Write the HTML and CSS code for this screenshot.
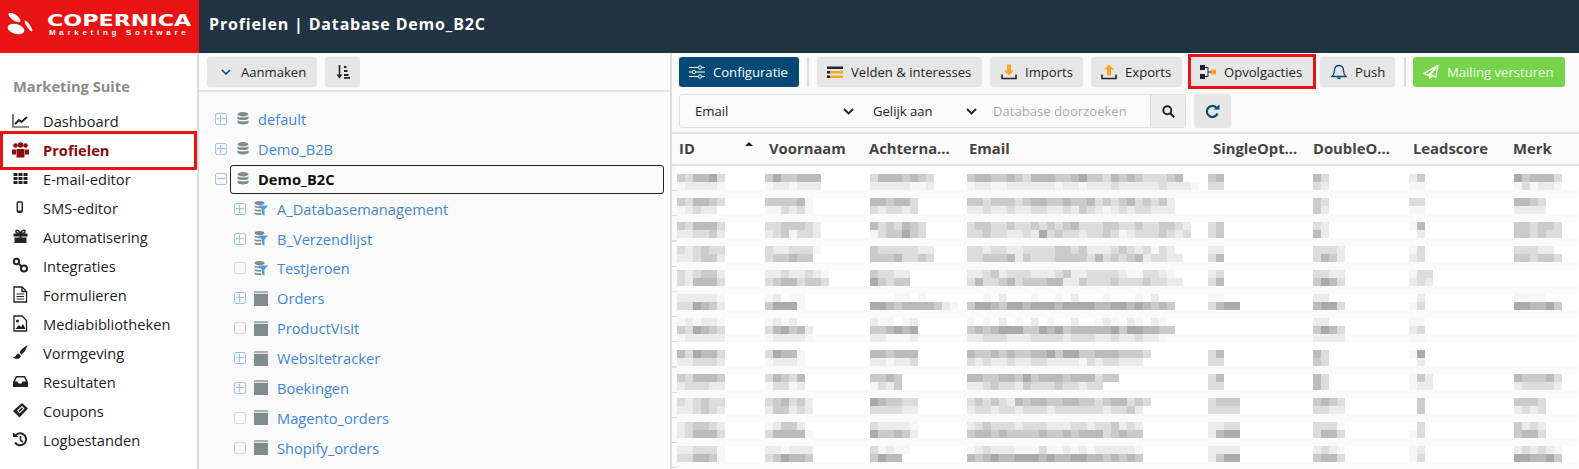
FILE: index.html
```html
<!DOCTYPE html>
<html lang="nl">
<head>
<meta charset="utf-8">
<title>Profielen | Database Demo_B2C</title>
<link rel="stylesheet" href="styles.css">
</head>
<body>
<div class="app">
  <a class="logo">
    <svg class="logo-mark" width="30" height="26" viewBox="0 0 30 26"><g fill="#fff"><ellipse cx="7.500" cy="4.500" rx="7" ry="2.900" transform="rotate(35 7.500 4.500)"/><ellipse cx="9" cy="16" rx="8.500" ry="5" transform="rotate(15 9 16)"/><ellipse cx="21.500" cy="13" rx="1.600" ry="6.500" transform="rotate(-35 21.500 13)"/></g></svg>
    <span class="logo-text"><span class="logo-name">COPERNICA</span><span class="logo-sub">Marketing Software</span></span>
  </a>
  <header class="topbar">Profielen | Database Demo_B2C</header>

  <nav class="sidebar">
    <h2 class="suite">Marketing Suite</h2>
    <ul class="menu">
      <li class="menu-item"><svg class="mi" viewBox="0 0 17 17"><path d="M1 2v13h16" fill="none" stroke="#222" stroke-width="1.200"/><path d="M3 12l4-4 2.500 2L15 5" fill="none" stroke="#222" stroke-width="2"/></svg>Dashboard</li>
      <li class="menu-item active"><svg class="mi" viewBox="0 0 17 17"><g fill="#8b0a0a"><circle cx="3.500" cy="4.500" r="2.300"/><circle cx="13.500" cy="4.500" r="2.300"/><circle cx="8.500" cy="4" r="2.800"/><path d="M0 8.500h4v5H0zM13 8.500h4v5h-4zM4.500 8h8v8.500h-8z"/></g></svg>Profielen</li>
      <li class="menu-item"><svg class="mi" viewBox="0 0 17 17"><path d="M1.500 3h4v3h-4zM6.500 3h4v3h-4zM11.500 3h4v3h-4zM1.500 7h4v3h-4zM6.500 7h4v3h-4zM11.500 7h4v3h-4zM1.500 11h4v3h-4zM6.500 11h4v3h-4zM11.500 11h4v3h-4z" fill="#222"/></svg>E-mail-editor</li>
      <li class="menu-item"><svg class="mi" viewBox="0 0 17 17"><rect x="5.300" y="3" width="5" height="10" rx="1" fill="none" stroke="#222" stroke-width="1.400"/><path d="M5.500 11.500h4.500V13.500H5.500z" fill="#222"/></svg>SMS-editor</li>
      <li class="menu-item"><svg class="mi" viewBox="0 0 17 17"><path d="M1.500 5.500h14v3h-14zM2.500 9.500h5V15h-5zM9.500 9.500h5V15h-5zM7.500 5.500h2V15h-2z" fill="#222"/><path d="M8.500 5C6 1 3.500 2 4 4s3 1 4.500 1c1.500 0 4 1 4.500-1s-2-3-4.500 1z" fill="none" stroke="#222" stroke-width="1.500"/></svg>Automatisering</li>
      <li class="menu-item"><svg class="mi" viewBox="0 0 17 17"><g fill="none" stroke="#222" stroke-width="2"><circle cx="4.500" cy="4.500" r="2.700"/><circle cx="12" cy="11.500" r="3"/><path d="M7 7l2.500 2.500"/></g></svg>Integraties</li>
      <li class="menu-item"><svg class="mi" viewBox="0 0 17 17"><path d="M2 1h8l4.500 4.500V16H2z M10 1v4.500h4.500" fill="none" stroke="#222" stroke-width="1.300"/><path d="M4.500 8h7.500M4.500 10.500h7.500M4.500 13h7.500" stroke="#222"/></svg>Formulieren</li>
      <li class="menu-item"><svg class="mi" viewBox="0 0 17 17"><path d="M2 1h8l4.500 4.500V16H2z" fill="none" stroke="#222" stroke-width="1.300"/><circle cx="5.500" cy="6" r="1.500" fill="#222"/><path d="M3.500 14l3.500-4 2 2 2-3 2.500 5z" fill="#222"/></svg>Mediabibliotheken</li>
      <li class="menu-item"><svg class="mi" viewBox="0 0 17 17"><path d="M15.500 1C12 3 8.500 6 7.500 8.500l2 2C12 9 14.500 5 15.500 1zM6.500 9.500C4 9.500 4.500 13 1 13.500c2 2 7 2 8-1.500z" fill="#222"/></svg>Vormgeving</li>
      <li class="menu-item"><svg class="mi" viewBox="0 0 17 17"><path d="M4 3h9l3 6v5H1V9z" fill="#222"/><path d="M4.800 4.500h7.400L14 8.500h-3.500l-1 2h-3l-1-2H3z" fill="#fff"/></svg>Resultaten</li>
      <li class="menu-item"><svg class="mi" viewBox="0 0 17 17"><path d="M1 9l9-8 6 5.500-8.500 9z" fill="#222"/><path d="M5 8.500l5-4.500 2.500 2.500-5 5z" fill="#fff"/><path d="M6.500 8.500l3.500-3 1 1-3.500 3.500z" fill="#222"/></svg>Coupons</li>
      <li class="menu-item"><svg class="mi" viewBox="0 0 17 17"><path d="M3.500 4.500A6 6 0 1 1 3 11.500" fill="none" stroke="#222" stroke-width="2"/><path d="M1 1.500l5.500 4.500H1z" fill="#222"/><path d="M8.500 5v4.300L11 11" fill="none" stroke="#222" stroke-width="1.600"/></svg>Logbestanden</li>
    </ul>
    <div class="mark mark-menu"></div>
  </nav>

  <main class="content">
    <section class="tree-panel">
      <div class="tree-toolbar">
        <button class="btn btn-create"><svg class="chev" width="10" height="6" viewBox="0 0 10 6"><path d="M1 1l4 4 4-4" fill="none" stroke="#004a75" stroke-width="1.500"/></svg>Aanmaken</button>
        <button class="btn btn-sort"><svg width="14" height="14" viewBox="0 0 14 14"><path d="M3.500 0v11" stroke="#222" stroke-width="1.600"/><path d="M0.500 9.500h6L3.500 13.500z" fill="#222"/><path d="M8 1h2.500v2H8zM8 5h3.500v2H8zM8 9h4.500v2H8zM8 12h6v1.800H8z" fill="#222"/></svg></button>
      </div>
      <ul class="tree">
        <li class="node"><span class="exp plus"></span><svg class="ic db" viewBox="0 0 12 13"><use href="#db"/></svg><span class="label">default</span></li>
        <li class="node"><span class="exp plus"></span><svg class="ic db" viewBox="0 0 12 13"><use href="#db"/></svg><span class="label">Demo_B2B</span></li>
        <li class="node focus"><span class="exp minus"></span><svg class="ic db" viewBox="0 0 12 13"><use href="#db"/></svg><span class="label">Demo_B2C</span></li>
        <li class="node sub"><span class="exp plus"></span><svg class="ic fl" viewBox="0 0 14 15"><use href="#fl"/></svg><span class="label">A_Databasemanagement</span></li>
        <li class="node sub"><span class="exp plus"></span><svg class="ic fl" viewBox="0 0 14 15"><use href="#fl"/></svg><span class="label">B_Verzendlijst</span></li>
        <li class="node sub"><span class="exp"></span><svg class="ic fl" viewBox="0 0 14 15"><use href="#fl"/></svg><span class="label">TestJeroen</span></li>
        <li class="node sub"><span class="exp plus"></span><svg class="ic fl" viewBox="0 0 14 15"><use href="#tb"/></svg><span class="label">Orders</span></li>
        <li class="node sub"><span class="exp"></span><svg class="ic fl" viewBox="0 0 14 15"><use href="#tb"/></svg><span class="label">ProductVisit</span></li>
        <li class="node sub"><span class="exp plus"></span><svg class="ic fl" viewBox="0 0 14 15"><use href="#tb"/></svg><span class="label">Websitetracker</span></li>
        <li class="node sub"><span class="exp plus"></span><svg class="ic fl" viewBox="0 0 14 15"><use href="#tb"/></svg><span class="label">Boekingen</span></li>
        <li class="node sub"><span class="exp"></span><svg class="ic fl" viewBox="0 0 14 15"><use href="#tb"/></svg><span class="label">Magento_orders</span></li>
        <li class="node sub"><span class="exp"></span><svg class="ic fl" viewBox="0 0 14 15"><use href="#tb"/></svg><span class="label">Shopify_orders</span></li>
      </ul>
    </section>

    <section class="data-panel">
      <div class="actions">
        <button class="btn btn-primary"><svg class="bi" viewBox="0 0 16 14"><g fill="none" stroke="#fff" stroke-width="1"><path d="M0 2.500h9M13 2.500h3M0 7h3M7 7h9M0 11.500h9M13 11.500h3"/><circle cx="11" cy="2.500" r="1.700"/><circle cx="5" cy="7" r="1.700"/><circle cx="11" cy="11.500" r="1.700"/></g></svg>Configuratie</button>
        <span class="sep"></span>
        <button class="btn btn-fields"><svg class="bi" viewBox="0 0 16 14"><path d="M0 1.500h16v2.500H0z" fill="#223"/><path d="M0 6h16v2.500H0zM0 10.500h16V13H0z" fill="#f5a623"/><path d="M0 6h3v2.500H0zM0 10.500h3V13H0z" fill="#223"/></svg>Velden &amp; interesses</button>
        <button class="btn btn-imports"><svg class="bi" viewBox="0 0 16 15"><path d="M6 0h4v6h3l-5 5-5-5h3z" fill="#f5a623"/><path d="M1 10v4h14v-4" fill="none" stroke="#223" stroke-width="1.600"/></svg>Imports</button>
        <button class="btn btn-exports"><svg class="bi" viewBox="0 0 16 15"><path d="M6 11h4V5h3L8 0 3 5h3z" fill="#f5a623"/><path d="M1 10v4h14v-4" fill="none" stroke="#223" stroke-width="1.600"/></svg>Exports</button>
        <button class="btn btn-follow"><svg class="bi" viewBox="0 0 16 16"><path d="M0 1h5v5H0zM0 10h5v5H0z" fill="#223"/><path d="M5 3.500h3v9H5M8 8h3" fill="none" stroke="#223"/><path d="M11 5.500h5v5h-5z" fill="#f5a623"/></svg>Opvolgacties</button>
        <button class="btn btn-push"><svg class="bi" viewBox="0 0 16 16"><path d="M8 1.500c-3 0-4.500 2-4.500 5 0 3-1 4.500-2.500 6h14c-1.500-1.500-2.500-3-2.500-6 0-3-1.500-5-4.500-5z" fill="none" stroke="#004a75" stroke-width="1.300"/><path d="M6 13.500c0 2.300 4 2.300 4 0z" fill="#004a75"/></svg>Push</button>
        <span class="sep sep-last"></span>
        <button class="btn btn-send"><svg class="bi" viewBox="0 0 17 16"><path d="M16 1L1 9.500l4.500 2L16 1l-9 11v3l3-3.200 3.500 1.500z" fill="none" stroke="#f2ffe8" stroke-width="1.500" stroke-linejoin="round"/></svg>Mailing versturen</button>
        <div class="mark mark-follow"></div>
      </div>
      <div class="search-row">
        <div class="search">
          <span class="sel sel-field">Email<svg width="11" height="7" viewBox="0 0 11 7"><path d="M1 1l4.500 4.500L10 1" fill="none" stroke="#222" stroke-width="1.800"/></svg></span>
          <span class="sel sel-op">Gelijk aan<svg width="11" height="7" viewBox="0 0 11 7"><path d="M1 1l4.500 4.500L10 1" fill="none" stroke="#222" stroke-width="1.800"/></svg></span>
          <span class="query">Database doorzoeken</span>
          <span class="go"><svg width="13" height="13" viewBox="0 0 13 13"><circle cx="5.300" cy="5.300" r="4" fill="none" stroke="#222" stroke-width="1.900"/><path d="M8.300 8.300l4 4" stroke="#222" stroke-width="2.200"/></svg></span>
        </div>
        <button class="btn btn-reload"><svg width="15" height="15" viewBox="0 0 15 15"><path d="M12.500 9.500A5.500 5.500 0 1 1 11.200 3.500" fill="none" stroke="#004a75" stroke-width="2.200"/><path d="M8.500 5.500h6v-5z" fill="#004a75"/></svg></button>
      </div>
      <div class="table-head">
        <span class="th th-id">ID<i class="sort-up"></i></span>
        <span class="th">Voornaam</span>
        <span class="th">Achterna…</span>
        <span class="th">Email</span>
        <span class="th">SingleOpt…</span>
        <span class="th">DoubleO…</span>
        <span class="th">Leadscore</span>
        <span class="th">Merk</span>
      </div>
      <div class="table-body"><div class="ticks"></div><div class="rows" id="rows"></div></div>
    </section>
  </main>
</div>

<svg class="defs" width="0" height="0">
  <symbol id="db" viewBox="0 0 12 13"><g fill="#7f8c8d"><ellipse cx="6" cy="2.200" rx="5.500" ry="2.200"/><path d="M.5 4.200c1 1.600 10 1.600 11 0v2.300c-1 2-10 2-11 0zM.5 8.200c1 1.600 10 1.600 11 0v2.500c-1 2.300-10 2.300-11 0z"/></g></symbol>
  <symbol id="fl" viewBox="0 0 14 15"><g fill="#7f8c8d"><ellipse cx="5.500" cy="2" rx="5" ry="2"/><path d="M.5 4.500c1 1 6 1.200 7 .8L8 7c-3 .4-6.500 0-7.500-1zM.5 8c1 .8 5 1 7 .8V10.500c-3 .3-6 0-7-1zM.5 11.500c1 .7 5 1 7 .8V14c-3 .2-6 0-7-1z"/></g><path d="M4 4.500h10L10.500 8.700v6L8 13V8.700z" fill="#4a9fe0"/></symbol>
  <symbol id="tb" viewBox="0 0 14 15"><rect y="0" width="14" height="2.300" fill="#a9b3b3"/><rect y="3" width="14" height="12" fill="#7f8c8d"/></symbol>
</svg>
<script src="script.js"></script>
</body>
</html>
```

FILE: styles.css
```css
* { box-sizing: border-box; }
html, body { margin: 0; padding: 0; height: 469px; overflow: hidden; background: #fff; }
body { font-family: "Open Sans", "Noto Sans", sans-serif; font-size: 14.670px; color: #222; }
ul { list-style: none; margin: 0; padding: 0; }
button { font: inherit; border: 0; }
.defs { position: absolute; }

.app { display: grid; grid-template-columns: 199px 1fr; grid-template-rows: 53px 416px; height: 469px; }

/* logo + top bar */
.logo { background: #ea1313; display: flex; align-items: center; padding-left: 7px; color: #fff; overflow: hidden; }
.logo-mark { flex: none; margin-top: -1px; }
.logo-text { display: flex; flex-direction: column; margin-left: 10px; margin-top: -2px; }
.logo-name { font-family: "DejaVu Sans", sans-serif; font-weight: 700; font-size: 16px; line-height: 15px; width: 144px; white-space: nowrap; transform: scaleX(1.390); transform-origin: left center; }
.logo-sub { font-family: "Liberation Sans", sans-serif; font-weight: 700; font-size: 8px; line-height: 10px; letter-spacing: 3.700px; margin-left: 2px; white-space: nowrap; }
.topbar { background: #223444; color: #fff; font-weight: 700; font-size: 16px; letter-spacing: .83px; line-height: 48px; padding-left: 10px; }

/* sidebar */
.sidebar { position: relative; border-right: 2px solid #ddd; padding: 22px 0 0 0; }
.suite { margin: 0 0 9px 13px; font-size: 14.670px; line-height: 22px; font-weight: 700; color: #8a8a8a; }
.menu-item { display: flex; align-items: center; height: 29px; padding-left: 12px; color: #222; }
.mi { width: 17px; height: 17px; margin-right: 14px; flex: none; }
.menu-item.active { color: #8b0a0a; font-weight: 700; }
.mark { position: absolute; border: 3px solid #e81414; pointer-events: none; }
.mark-menu { left: 0; top: 78px; width: 197px; height: 39px; }

/* content split */
.content { display: grid; grid-template-columns: 471px 1fr; min-width: 0; }

/* tree */
.tree-panel { background: #fafafa; }
.tree-toolbar { display: flex; gap: 8px; height: 39px; padding: 4px 8px 0; border-bottom: 2px solid #e4e4e4; }
.btn { display: inline-flex; align-items: center; flex: none; height: 30px; background: #e6e6e6; border-radius: 3px; padding: 0 0 0 10px; color: #222; font-size: 13.100px; white-space: nowrap; }
.btn svg { flex: none; }
.btn-create { width: 110px; padding-left: 14px; }
.chev { margin-right: 10px; }
.btn-sort { width: 35px; padding-left: 11px; }
.tree { padding-top: 12px; }
.node { display: flex; align-items: center; height: 29.900px; padding-left: 16px; margin-right: 6px; }
.node.sub { padding-left: 35px; }
.exp { position: relative; width: 12px; height: 12px; border: 1px solid #d9d9d9; border-radius: 2px; flex: none; background: #fafafa; }
.exp.plus, .exp.minus { border-color: #9cc3ec; }
.exp.plus::before, .exp.minus::before { content: ""; position: absolute; left: 1px; right: 1px; top: 4px; height: 2px; border-top: 1px solid #9cc3ec; }
.exp.plus::after { content: ""; position: absolute; top: 1px; bottom: 1px; left: 4px; width: 2px; border-left: 1px solid #9cc3ec; }
.ic { flex: none; }
.ic.db { width: 12px; height: 13px; margin: 0 9px 0 10px; }
.ic.fl { width: 14px; height: 15px; margin: 0 9px 0 8px; }
.label { color: #3f87d8; white-space: nowrap; }
.node.focus { position: relative; }
.node.focus .label { color: #111; font-weight: 700; }
.node.focus::after { content: ""; position: absolute; left: 31px; right: 0; top: 1px; height: 27px; border: 1px solid #222; border-radius: 3px; }

/* data panel */
.data-panel { position: relative; border-left: 2px solid #ddd; background: #fafafa; display: flex; flex-direction: column; min-width: 0; }
.actions { position: relative; display: flex; align-items: flex-start; gap: 8px; height: 41px; padding: 4px 0 0 7px; }
.bi { width: 16px; height: 16px; margin-right: 8px; }
.sep { width: 2px; height: 30px; background: #ddd; flex: none; }
.btn-primary { background: #004a75; color: #fff; width: 120px; }
.btn-fields { width: 165px; }
.btn-imports { width: 93px; padding-left: 11px; }
.btn-exports { width: 91px; }
.btn-follow { width: 124px; }
.btn-push { width: 75px; margin-left: -2px; padding-left: 11px; }
.sep-last { margin-left: 1px; margin-right: -1px; }
.btn-send { background: #76d34a; color: #f2ffe8; width: 152px; }
.mark-follow { left: 516px; top: 1px; width: 128px; height: 35px; }

.search-row { display: flex; gap: 8px; height: 38px; padding-left: 7px; }
.search { display: flex; align-items: center; width: 507px; height: 34px; border: 1px solid #ddd; border-radius: 3px; font-size: 13.100px; }
.sel { display: flex; align-items: center; justify-content: space-between; }
.sel-field { width: 174px; padding-left: 15px; }
.sel-op { width: 104px; margin-left: 19px; }
.query { flex: 1; padding-left: 16px; color: #aaa; white-space: nowrap; }
.go { width: 35px; height: 32px; display: flex; align-items: center; justify-content: center; background: #eee; border-left: 1px solid #ddd; }
.btn-reload { width: 37px; height: 34px; padding-left: 11px; }

.table-head { display: grid; grid-template-columns: 90px 100px 100px 244px 100px 100px 100px 1fr; align-items: center; height: 34px; flex: none; padding: 0 0 2px 7px; border-top: 2px solid #e4e4e4; border-bottom: 2px solid #e4e4e4; }
.th { position: relative; font-weight: 700; font-size: 14.800px; color: #444; white-space: nowrap; }
.sort-up { position: absolute; left: 66px; top: 4px; border: 4px solid transparent; border-top: 0; border-bottom: 4px solid #222; }

.table-body { display: flex; flex: 1; background: #fff; min-height: 0; overflow: hidden; }
.ticks { width: 5px; flex: none; height: 100%; background: repeating-linear-gradient(to bottom, transparent 0, transparent 24px, #ddd 24px, #ddd 25.200px); background-color: #fafafa; }
.rows { flex: 1; min-width: 0; margin-right: 1px; }
.line { display: grid; grid-template-columns: 88px 105px 97px 241px 105px 96px 105px 1fr; height: 8px; }
.line.stripe { background: #fafafa; }
.cell { display: flex; height: 8px; }
.px { display: block; width: 8px; height: 8px; flex: none; }
.g-a { background: #aaa; }
.g-b { background: #bbb; }
.g-c { background: #cbcbcb; }
.g-d { background: #dcdcdc; }
.g-e { background: #ebebeb; }
.g-f { background: #f6f6f6; }
```

FILE: script.js
```js
// Pixelated (anonymised) table cells: one string of grey levels per column, per 8px line.
var S = null;
var LINES = [
  [],
  ["cdbbad","caccbbb","dbbbcbcd","cbbccbcdbbbccbaccdbcbcdddcb","cb","bd","ec","acbbbd"],
  ["feeeef","feefeee","eeeeeffe","feeffeeeeeefeefeeedeeeeedeeef","dd","de","ff","fdfeef"],
  S,
  ["cdbbcd","ccccbf","bbcbbd","ccdcccdcbbccbccbdcdcbdcdce","","cd","dd","bbcd"],
  ["fedee","ffdedf","dedded","eedeedeeddeedecdefededdeee","","ce","ff","eeee"],
  S,
  ["cdbbbd","ddcccde","bdcdbcd","dccddcddcdcdcbdddccddcddccde","dc","de","fb","ccdccd"],
  ["eeddce","edcfdde","fdccacd","ddcddeedeadcddeddcdfedddcded","dc","be",".e","ccdcdd"],
  S,
  ["dedcdd","deedddf","cdddddee","ddeddeeddddccdceeedcdedfde","ee","ddde","fd","dddee"],
  ["eedcce","dccbcc","cccbddcd","ddcccbecdddccccdbdcdcbeddee","db","dbce","ed","ccdccd"],
  S,
  ["dedcce","eedeedef","cddee","eedcedddeeedceeddddeffddef","ed","ddee","fdd",""],
  ["debbbd","dcbbdccd","acdcc","dbddcbdcccbbeecdddcdddcddee","db","cabd","ede",""],
  S,
  ["eeeeef","fe.ff","...ff.f","..f.e...f..f.e...f...f.e","ff","ee",".e","ffff"],
  ["ddabce","caaaf","aabcbbbbcef","caabcaabaaabaaaabbaababcbc","dbaa","baad","fd","aabbac"],
  S,
  ["fefeef","fefe","eff.fe","f.f.e.f.e.f..e..fef.ef.ef","","ee","ff",""],
  ["cdabcd","dbacbe","ccbaba","cbcbaaaccabacbbbbbacaabbcc","","cabd","ed",""],
  ["feeeee","feeeef","eefffe","eedddeeeddddedddeedeedeef","","eeee","ff",""],
  [],
  ["bdabbd","dabbf","bbcbbb","bccbcbccbbacaaccbbbcccd","db","bd","fa",""],
  ["eeddde","feeef","eefeed","dedeedeeddeeeefdeddeee","dd","cd",".e",""],
  S,
  ["cdbbbc","dbcdb","ccbc","bbccbbcacbbbcbbbdcc","db","bd","fce","bcccbd"],
  ["edddee","fddfe","fdec","eedcddecdddcddedd","dd","bd","fee","edddde"],
  S,
  ["dedcdd","dcbdce","abccdd","dcdcdebcbbccbbccdcbbdcd","dccc","cbcd",".c","cccd"],
  ["eedcde","eccede","ddddee","eddeddedddeddddddeddce","dddd","ddee",".c","eded"],
  S,
  ["edccde","fecce","deeeef","edcdddedddeeeddeddcede","eedd","dddf",".d","cede"],
  ["edbbbd","dbbbbf","accbce","cbbcbccccbccbcbbbdcbcc","ebaa","dbbd","fd","cbbd"],
  S,
  ["eedddf","eefeee","dfeff","fedeeefffdffefefeeeeef","eeee","edef","fe","ededef"],
  ["ddbbcf","dcabbc","cabb","bcbabbaaababbaabbcbcbc","ecaa","cbbd","fd","aabbac"],
  S
];
var host = document.getElementById("rows");
LINES.forEach(function (cols) {
  var line = document.createElement("div");
  line.className = "line";
  if (cols === S) { line.className += " stripe"; cols = []; }
  if (cols.length && cols[0] === "feeeee") { line.className += " stripe"; }
  for (var c = 0; c < 8; c++) {
    var cell = document.createElement("div");
    cell.className = "cell";
    (cols[c] || "").split("").forEach(function (g) {
      var p = document.createElement("span");
      p.className = g === "." ? "px" : "px g-" + g;
      cell.appendChild(p);
    });
    line.appendChild(cell);
  }
  host.appendChild(line);
});
```
